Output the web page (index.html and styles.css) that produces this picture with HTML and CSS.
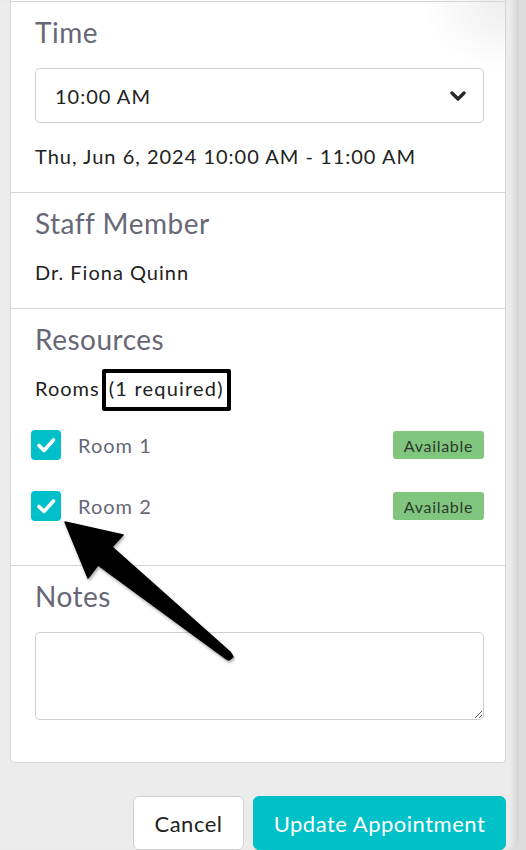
FILE: index.html
```html
<!DOCTYPE html>
<html>
<head>
<meta charset="utf-8">
<link rel="stylesheet" href="styles.css">
</head>
<body>
<div class="modal">
  <div class="card">
    <section class="sec">
      <h2 class="heading">Time</h2>
      <div class="select">
        <span>10:00 AM</span>
        <svg class="chev" width="16" height="10" viewBox="0 0 16 10"><polyline points="2,2 8,8 14,2" fill="none" stroke="#2a2a2a" stroke-width="3.4" stroke-linecap="round" stroke-linejoin="round"/></svg>
      </div>
      <p class="text">Thu, Jun 6, 2024 10:00 AM - 11:00 AM</p>
    </section>
    <section class="sec">
      <h2 class="heading">Staff Member</h2>
      <p class="text">Dr. Fiona Quinn</p>
    </section>
    <section class="sec sec-res">
      <h2 class="heading">Resources</h2>
      <p class="text">Rooms <span class="marked">(1 required)</span></p>
      <div class="rooms">
        <div class="room">
          <span class="check"><svg width="30" height="30" viewBox="0 0 30 30"><polyline points="8,15.5 13,20.5 22.5,10" fill="none" stroke="#fff" stroke-width="3.6" stroke-linecap="round" stroke-linejoin="round"/></svg></span>
          <span class="room-name">Room 1</span>
          <span class="badge">Available</span>
        </div>
        <div class="room">
          <span class="check"><svg width="30" height="30" viewBox="0 0 30 30"><polyline points="8,15.5 13,20.5 22.5,10" fill="none" stroke="#fff" stroke-width="3.6" stroke-linecap="round" stroke-linejoin="round"/></svg></span>
          <span class="room-name">Room 2</span>
          <span class="badge">Available</span>
        </div>
      </div>
    </section>
    <section class="sec sec-notes">
      <h2 class="heading">Notes</h2>
      <textarea class="notes"></textarea>
    </section>
  </div>
  <div class="actions">
    <button class="btn btn-cancel">Cancel</button>
    <button class="btn btn-primary">Update Appointment</button>
  </div>
</div>
<svg class="arrow" width="526" height="850" viewBox="0 0 526 850">
  <defs>
    <filter id="sh" x="-20%" y="-20%" width="140%" height="140%">
      <feDropShadow dx="1" dy="2" stdDeviation="1.5" flood-color="#000" flood-opacity="0.35"/>
    </filter>
  </defs>
  <polygon filter="url(#sh)" points="65,522 123,535 112,547 230,652 233,657 229,660 225,658 98,565 88,578" fill="#000" stroke="#000" stroke-width="1.5" stroke-linejoin="round"/>
</svg>
</body>
</html>
```

FILE: styles.css
```css
* { box-sizing: border-box; }
html, body { margin: 0; padding: 0; }
body {
  width: 526px;
  height: 850px;
  overflow: hidden;
  background: #dcdcdc;
  font-family: "Lato", "Noto Sans", sans-serif;
  position: relative;
}
.modal {
  width: 519px;
  height: 850px;
  background: #ececec;
  border-bottom-right-radius: 10px;
  box-shadow: inset -8px 0 6px -4px #d2d2d2;
  padding: 0 0 0 10px;
}
.card {
  width: 496px;
  background: #fff;
  border: 1px solid #d6d6d6;
  border-top: none;
  border-radius: 0 0 5px 5px;
  padding-top: 1px;
  background-image: radial-gradient(ellipse 90px 70px at 500px 0px, #ececec 0%, rgba(255,255,255,0) 100%);
}
.sec {
  border-top: 1px solid #d6d6d6;
  padding: 14px 21px 24px 24px;
}
.heading {
  margin: 0;
  font-size: 28px;
  line-height: 32px;
  font-weight: 400;
  letter-spacing: 0.5px;
  color: #676777;
}
.select {
  margin-top: 20px;
  height: 55px;
  border: 1px solid #cfcfcf;
  border-radius: 5px;
  display: flex;
  align-items: center;
  justify-content: space-between;
  padding: 0 17px 0 19px;
  font-size: 20px;
  letter-spacing: 1px;
  color: #222;
}
.chev { display: block; }
.text {
  margin: 21px 0 0;
  font-size: 20px;
  line-height: 24px;
  letter-spacing: 1px;
  color: #222;
}
.marked {
  position: relative;
  margin-left: 3px;
  letter-spacing: 1.2px;
}
.marked::after {
  content: "";
  position: absolute;
  left: -7px;
  right: -7px;
  top: -7px;
  bottom: -11px;
  border: 4px solid #000;
  border-radius: 2px;
}
.sec-res { padding-bottom: 44px; }
.rooms {
  margin-top: 30px;
  display: flex;
  flex-direction: column;
  gap: 31px;
}
.room {
  display: flex;
  align-items: center;
  height: 30px;
}
.check {
  width: 30px;
  height: 30px;
  margin-left: -4px;
  background: #00bfc8;
  border-radius: 4px;
  display: block;
}
.check svg { display: block; }
.room-name {
  margin-left: 17px;
  font-size: 20px;
  letter-spacing: 1px;
  color: #676777;
  flex: 1;
}
.badge {
  width: 91px;
  height: 28px;
  background: #80c67e;
  border-radius: 3px;
  color: #2d3a2d;
  font-size: 16px;
  letter-spacing: 0.7px;
  display: flex;
  align-items: center;
  justify-content: center;
}
.sec-notes { padding-bottom: 42px; }
.notes {
  display: block;
  margin-top: 20px;
  width: 100%;
  height: 88px;
  border: 1px solid #cfcfcf;
  border-radius: 5px;
  font-family: inherit;
}
.actions {
  display: flex;
  justify-content: flex-end;
  gap: 9px;
  margin-top: 33px;
  width: 496px;
}
.btn {
  height: 54px;
  border-radius: 6px;
  font-family: inherit;
  font-size: 22px;
  letter-spacing: 0.5px;
  padding: 0;
}
.btn-cancel {
  width: 111px;
  background: #fff;
  border: 1px solid #d0d0d0;
  color: #222;
}
.btn-primary {
  width: 253px;
  background: #00c0c8;
  border: 1px solid #00c0c8;
  color: #fff;
}
.arrow {
  position: absolute;
  left: 0;
  top: 0;
  pointer-events: none;
}
```
